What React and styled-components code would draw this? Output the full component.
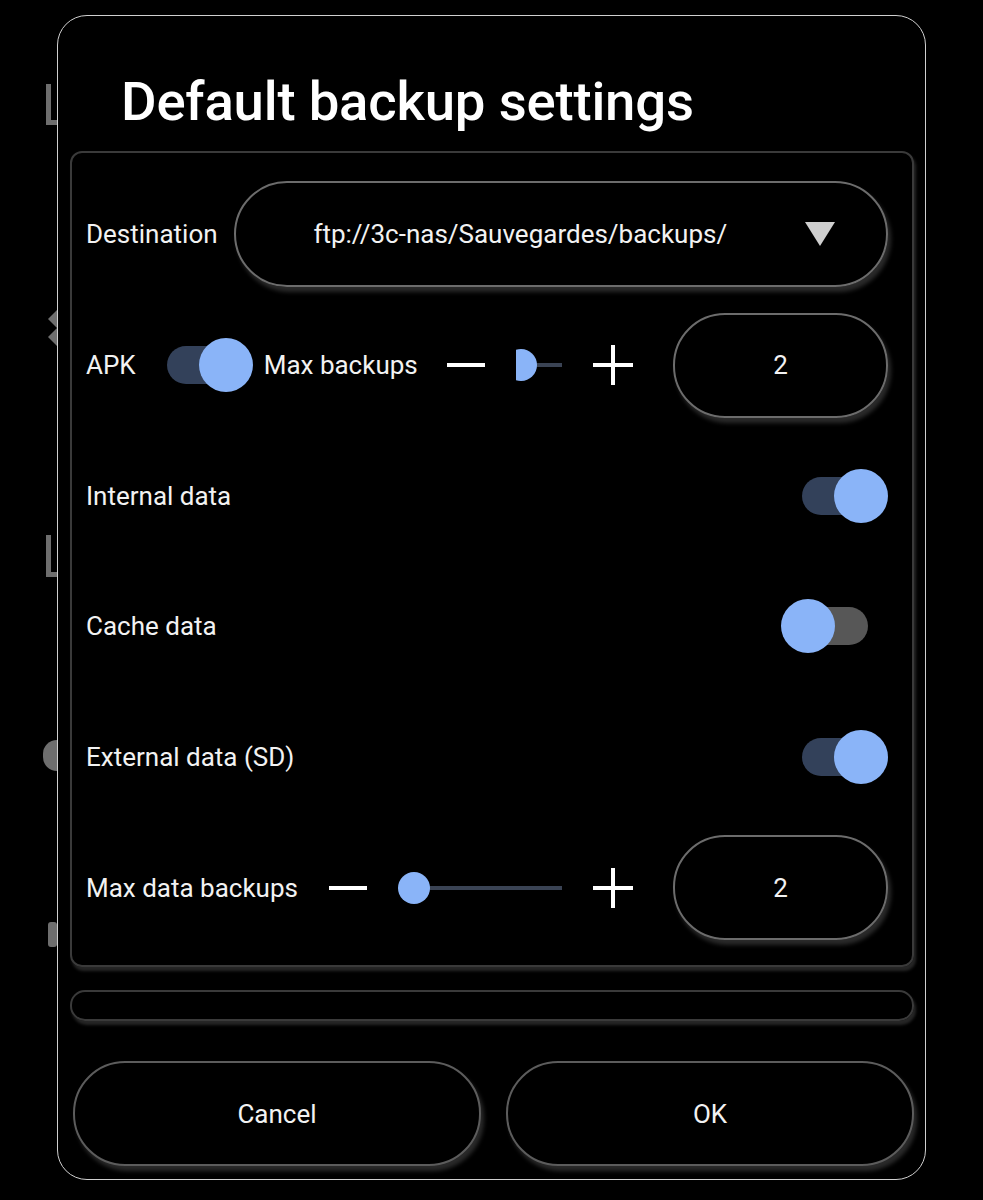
import React from 'react'
import styled, { createGlobalStyle } from 'styled-components'

const GlobalStyle = createGlobalStyle`
  html, body {
    margin: 0;
    padding: 0;
    background: #000;
  }
  body {
    font-family: Roboto, "Liberation Sans", Arial, sans-serif;
    color: #f2f2f2;
  }
`

const Screen = styled.div`
  position: relative;
  width: 983px;
  height: 1200px;
  background: #000;
  overflow: hidden;
  padding-top: 15px;
  box-sizing: border-box;
`

// bits of the screen behind the dialog that peek out on the left
const Ghost = styled.div`
  position: absolute;
  background: #6e6e6e;
  left: ${p => p.x}px;
  top: ${p => p.y}px;
  width: ${p => p.w}px;
  height: ${p => p.h}px;
  border-radius: ${p => p.r || 0}px;
`

const Dialog = styled.div`
  position: relative;
  margin-left: 57px;
  width: 869px;
  height: 1165px;
  box-sizing: border-box;
  border: 1.5px solid #d0d0d0;
  border-radius: 30px;
  background: #000;
  display: flex;
  flex-direction: column;
  padding: 0 11px 0 12px;
`

const Title = styled.h1`
  margin: 0;
  height: 135px;
  box-sizing: border-box;
  padding: 55px 0 0 51px;
  font-size: 54.5px;
  line-height: 60px;
  font-weight: 500;
  color: #fff;
  letter-spacing: -0.2px;
`

const Panel = styled.div`
  border: 2px solid #3a3a3a;
  border-radius: 12px;
  box-shadow: 2px 4px 3px #262626;
  padding: 16px 24px 12px 14px;
  box-sizing: border-box;
  height: 816px;
  display: flex;
  flex-direction: column;
`

const Row = styled.div`
  height: 131px;
  display: flex;
  align-items: center;
`

const Label = styled.span`
  font-size: 26px;
  color: #f2f2f2;
  white-space: nowrap;
  margin-right: ${p => p.gap || 0}px;
`

const Dropdown = styled.div`
  flex: 1;
  height: 106px;
  border: 2px solid #6c6c6c;
  border-radius: 53px;
  box-shadow: 3px 5px 4px #2a2a2a;
  box-sizing: border-box;
  display: flex;
  align-items: center;
  padding: 0 51px 0 0;
`

const DropText = styled.span`
  flex: 1;
  text-align: center;
  font-size: 26px;
  color: #f2f2f2;
`

const Caret = styled.span`
  width: 0;
  height: 0;
  border-left: 15px solid transparent;
  border-right: 15px solid transparent;
  border-top: 24px solid #cfcfcf;
`

const SwitchBox = styled.div`
  position: relative;
  flex: none;
  width: 107px;
  height: 54px;
  margin-left: ${p => (p.end ? 'auto' : '0')};
`

const Track = styled.div`
  position: absolute;
  left: 21px;
  top: 8px;
  width: 66px;
  height: 38px;
  border-radius: 19px;
  background: ${p => (p.on ? '#33415a' : '#575757')};
`

const Thumb = styled.div`
  position: absolute;
  top: 0;
  left: ${p => (p.on ? 53 : 0)}px;
  width: 54px;
  height: 54px;
  border-radius: 50%;
  background: #8ab4f8;
`

const Switch = ({ on, end }) => (
  <SwitchBox end={end}>
    <Track on={on} />
    <Thumb on={on} />
  </SwitchBox>
)

const Stepper = styled.div`
  margin-left: auto;
  display: flex;
  align-items: center;
  gap: 31px;
`

const Minus = styled.div`
  width: 38px;
  height: 4px;
  background: #fff;
`

const Plus = styled.div`
  position: relative;
  width: 40px;
  height: 40px;
  &::before, &::after {
    content: '';
    position: absolute;
    background: #fff;
  }
  &::before {
    left: 0;
    top: 18px;
    width: 40px;
    height: 4px;
  }
  &::after {
    left: 18px;
    top: 0;
    width: 4px;
    height: 40px;
  }
`

const SliderBox = styled.div`
  position: relative;
  width: ${p => p.w}px;
  height: 32px;
  overflow: hidden;
`

const SliderTrack = styled.div`
  position: absolute;
  left: 10px;
  right: 0;
  top: 14px;
  height: 4px;
  background: #3a4354;
`

const SliderThumb = styled.div`
  position: absolute;
  top: 0;
  left: ${p => p.x}px;
  width: 32px;
  height: 32px;
  border-radius: 50%;
  background: #8ab4f8;
`

const Slider = ({ w, x }) => (
  <SliderBox w={w}>
    <SliderTrack />
    <SliderThumb x={x} />
  </SliderBox>
)

const Count = styled.div`
  flex: none;
  margin-left: 40px;
  width: 215px;
  height: 105px;
  border: 2px solid #6c6c6c;
  border-radius: 52px;
  box-shadow: 3px 5px 4px #2a2a2a;
  box-sizing: border-box;
  display: flex;
  align-items: center;
  justify-content: center;
  font-size: 26px;
  color: #f2f2f2;
`

const Strip = styled.div`
  margin-top: 23px;
  height: 31px;
  border: 2px solid #3a3a3a;
  border-radius: 15px;
  box-shadow: 2px 4px 3px #262626;
  box-sizing: border-box;
`

const Buttons = styled.div`
  margin-top: 40px;
  display: flex;
  gap: 25px;
  padding-left: 3px;
`

const Button = styled.button`
  flex: 1;
  height: 105px;
  background: #000;
  border: 2px solid #5c5c5c;
  border-radius: 52px;
  box-shadow: 3px 5px 4px #2a2a2a;
  color: #f2f2f2;
  font-family: Roboto, "Liberation Sans", Arial, sans-serif;
  font-size: 26px;
  cursor: pointer;
`

const Chevron = styled.div`
  position: absolute;
  left: ${p => p.x}px;
  top: ${p => p.y}px;
  width: 0;
  height: 0;
  border-top: 9px solid transparent;
  border-bottom: 9px solid transparent;
  border-right: 9px solid #6e6e6e;
`

export default function App() {
  return (
    <>
      <GlobalStyle />
      <Screen>
        <Ghost x={46} y={84} w={5} h={41} />
        <Ghost x={46} y={120} w={11} h={5} />
        <Chevron x={48} y={310} />
        <Chevron x={48} y={328} />
        <Ghost x={46} y={535} w={5} h={42} />
        <Ghost x={46} y={572} w={11} h={5} />
        <Ghost x={43} y={740} w={28} h={31} r={15} />
        <Ghost x={48} y={922} w={9} h={25} r={3} />
        <Dialog>
          <Title>Default backup settings</Title>
          <Panel>
            <Row>
              <Label gap={16}>Destination</Label>
              <Dropdown>
                <DropText>ftp://3c-nas/Sauvegardes/backups/</DropText>
                <Caret />
              </Dropdown>
            </Row>
            <Row>
              <Label gap={10}>APK</Label>
              <Switch on />
              <Label style={{ marginLeft: 11 }}>Max backups</Label>
              <Stepper>
                <Minus />
                <Slider w={46} x={-11} />
                <Plus />
              </Stepper>
              <Count>2</Count>
            </Row>
            <Row>
              <Label>Internal data</Label>
              <Switch on end />
            </Row>
            <Row>
              <Label>Cache data</Label>
              <Switch end />
            </Row>
            <Row>
              <Label>External data (SD)</Label>
              <Switch on end />
            </Row>
            <Row>
              <Label>Max data backups</Label>
              <Stepper>
                <Minus />
                <Slider w={164} x={0} />
                <Plus />
              </Stepper>
              <Count>2</Count>
            </Row>
          </Panel>
          <Strip />
          <Buttons>
            <Button>Cancel</Button>
            <Button>OK</Button>
          </Buttons>
        </Dialog>
      </Screen>
    </>
  )
}
